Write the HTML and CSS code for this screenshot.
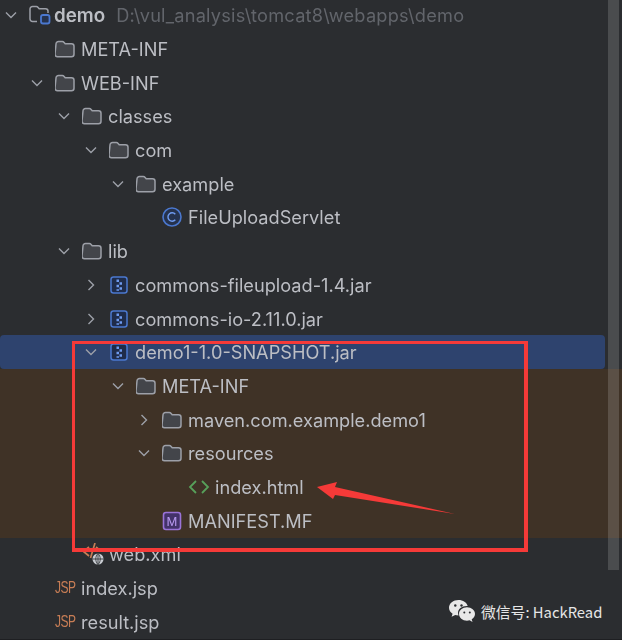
FILE: index.html
```html
<!DOCTYPE html>
<html lang="zh-CN">
<head>
    <meta charset="UTF-8">
    <meta name="viewport" content="width=device-width, initial-scale=1.0">
    <title>demo</title>
    <link rel="stylesheet" href="styles.css">
</head>
<body>
    <svg class="defs" width="0" height="0">
        <defs>
            <symbol id="open" viewBox="0 0 14 14"><path d="M2 4.500 7 9.500 12 4.500" fill="none" stroke="#9da0a8" stroke-width="1.400"/></symbol>
            <symbol id="closed" viewBox="0 0 14 14"><path d="M4.500 2 9.500 7 4.500 12" fill="none" stroke="#9da0a8" stroke-width="1.400"/></symbol>
            <symbol id="folder" viewBox="0 0 20 18"><path d="M1 4a2.500 2.500 0 0 1 2.500-2.500h3.800c.8 0 1.300.3 1.800.9l1.100 1.300h6.300a2.500 2.500 0 0 1 2.500 2.500v8a2.500 2.500 0 0 1-2.500 2.500h-14a2.500 2.500 0 0 1-2.500-2.500z" fill="#43454a" stroke="#9da0a8" stroke-width="1.500"/></symbol>
            <symbol id="jar" viewBox="0 0 18 18"><rect x="1" y="1" width="16" height="16" rx="2.500" fill="#1f2c4a" stroke="#4b78cf" stroke-width="1.500"/><path d="M6.500 3.500h2.500v2.500h-2.500zM9.500 6.200h2.500v2.500h-2.500zM6.500 8.700h2.500v2.500h-2.500zM9.500 11.200h2.500v2.500h-2.500zM6.500 13.200h2.500v1.500h-2.500z" fill="#6f9bf0"/></symbol>
        </defs>
    </svg>

    <div class="tree">
        <div class="row d0">
            <svg class="arrow"><use href="#open"/></svg>
            <svg class="icon-module" viewBox="0 0 22 20" width="22" height="20">
                <path d="M8 16.500H3.500A2.500 2.500 0 0 1 1 14V4a2.500 2.500 0 0 1 2.500-2.500h3.800c.8 0 1.300.3 1.800.9l1.100 1.300h6.300A2.500 2.500 0 0 1 19 6.200V8" fill="none" stroke="#9da0a8" stroke-width="1.500"/>
                <rect x="12" y="10" width="8.500" height="8.500" rx="2" fill="#25324d" stroke="#4b78cf" stroke-width="1.800"/>
            </svg>
            <span class="name bold">demo</span>
            <span class="path">D:\vul_analysis\tomcat8\webapps\demo</span>
        </div>
        <div class="row d1">
            <span class="arrow"></span>
            <svg class="icon-folder"><use href="#folder"/></svg>
            <span class="name">META-INF</span>
        </div>
        <div class="row d1">
            <svg class="arrow"><use href="#open"/></svg>
            <svg class="icon-folder"><use href="#folder"/></svg>
            <span class="name">WEB-INF</span>
        </div>
        <div class="row d2">
            <svg class="arrow"><use href="#open"/></svg>
            <svg class="icon-folder"><use href="#folder"/></svg>
            <span class="name">classes</span>
        </div>
        <div class="row d3">
            <svg class="arrow"><use href="#open"/></svg>
            <svg class="icon-folder"><use href="#folder"/></svg>
            <span class="name">com</span>
        </div>
        <div class="row d4">
            <svg class="arrow"><use href="#open"/></svg>
            <svg class="icon-folder"><use href="#folder"/></svg>
            <span class="name">example</span>
        </div>
        <div class="row d5">
            <span class="arrow"></span>
            <svg class="icon-square" viewBox="0 0 20 20">
                <circle cx="10" cy="10" r="9" fill="#25324d" stroke="#4b78cf" stroke-width="1.600"/>
                <path d="M13.300 7.200A4.200 4.200 0 1 0 13.300 12.800" fill="none" stroke="#6f9bf0" stroke-width="1.400"/>
            </svg>
            <span class="name">FileUploadServlet</span>
        </div>
        <div class="row d2">
            <svg class="arrow"><use href="#open"/></svg>
            <svg class="icon-folder"><use href="#folder"/></svg>
            <span class="name">lib</span>
        </div>
        <div class="row d3">
            <svg class="arrow"><use href="#closed"/></svg>
            <svg class="icon-jar"><use href="#jar"/></svg>
            <span class="name">commons-fileupload-1.4.jar</span>
        </div>
        <div class="row d3">
            <svg class="arrow"><use href="#closed"/></svg>
            <svg class="icon-jar"><use href="#jar"/></svg>
            <span class="name">commons-io-2.11.0.jar</span>
        </div>
        <div class="row d3 selected">
            <svg class="arrow"><use href="#open"/></svg>
            <svg class="icon-jar"><use href="#jar"/></svg>
            <span class="name">demo1-1.0-SNAPSHOT.jar</span>
        </div>
        <div class="jar-content">
            <div class="row d4">
                <svg class="arrow"><use href="#open"/></svg>
                <svg class="icon-folder"><use href="#folder"/></svg>
                <span class="name">META-INF</span>
            </div>
            <div class="row d5">
                <svg class="arrow"><use href="#closed"/></svg>
                <svg class="icon-folder"><use href="#folder"/></svg>
                <span class="name">maven.com.example.demo1</span>
            </div>
            <div class="row d5">
                <svg class="arrow"><use href="#open"/></svg>
                <svg class="icon-folder"><use href="#folder"/></svg>
                <span class="name">resources</span>
            </div>
            <div class="row d6">
                <span class="arrow"></span>
                <svg class="icon-wide" viewBox="0 0 22 22">
                    <path d="M8 5 2 11l6 6M14 5l6 6-6 6" fill="none" stroke="#57a05a" stroke-width="1.800"/>
                </svg>
                <span class="name">index.html</span>
            </div>
            <div class="row d5">
                <span class="arrow"></span>
                <svg class="icon-square" viewBox="0 0 20 20">
                    <rect x="1.500" y="1.500" width="17" height="17" rx="2.500" fill="#43326a" stroke="#9a73d8" stroke-width="1.600"/>
                    <text class="m-letter" x="10" y="15" text-anchor="middle">M</text>
                </svg>
                <span class="name">MANIFEST.MF</span>
            </div>
        </div>
        <div class="row d2">
            <span class="arrow"></span>
            <svg class="icon-wide" viewBox="0 0 22 22">
                <path d="M7 4 1.500 8.500 7 13M13 0 8.500 15M14 4l3.500 3" fill="none" stroke="#c77d55" stroke-width="1.700"/>
                <circle cx="16" cy="16" r="5.500" fill="#c9ccd2"/>
                <path d="M10.500 16h11M16 10.500v11M16 10.500c-3 3-3 8 0 11M16 10.500c3 3 3 8 0 11" fill="none" stroke="#2b2d30" stroke-width=".8"/>
            </svg>
            <span class="name">web.xml</span>
        </div>
        <div class="row d1">
            <span class="arrow"></span>
            <span class="icon-jsp">JSP</span>
            <span class="name">index.jsp</span>
        </div>
        <div class="row d1">
            <span class="arrow"></span>
            <span class="icon-jsp">JSP</span>
            <span class="name">result.jsp</span>
        </div>
    </div>

    <!-- overlays: scrollbar, annotation, watermark -->
    <div class="scrollbar"></div>
    <div class="red-box"></div>
    <svg class="red-arrow" width="140" height="30" viewBox="0 0 140 30">
        <polygon points="1,3 21,-2 19,3 139,30 19,11 17,15" fill="#f53a38"/>
    </svg>
    <div class="watermark">
        <svg class="wechat" width="26" height="23" viewBox="0 0 26 23">
            <path d="M9.500 0C4.300 0 0 3.400 0 7.700c0 2.500 1.400 4.600 3.600 6l-1 3.100 3.600-1.900c1 .3 2 .4 3.300.5-.3-.9-.5-1.700-.5-2.600C9 8.800 12.800 5.700 18.700 6 17.700 2.500 14 0 9.500 0z" fill="#e8e8e8"/>
            <path d="M26 14c0-3.700-3.500-6.700-8-6.700s-8 3-8 6.700 3.500 6.700 8 6.700c.9 0 1.800-.1 2.600-.4L23.500 22l-.8-2.700C24.700 18 26 16.100 26 14z" fill="#e8e8e8"/>
            <circle cx="6.300" cy="5.500" r="1.200" fill="#2b2d30"/>
            <circle cx="12.500" cy="5.500" r="1.200" fill="#2b2d30"/>
            <circle cx="15.300" cy="12.500" r="1" fill="#2b2d30"/>
            <circle cx="20.800" cy="12.500" r="1" fill="#2b2d30"/>
        </svg>
        <span class="wm-text">微信号: HackRead</span>
    </div>
</body>
</html>
```

FILE: styles.css
```css
html, body {
    height: 640px;
}

body {
    margin: 0;
    position: relative;
    overflow: hidden;
    background-color: #2b2d30;
    border-bottom: 1px solid #1e1f22;
    box-sizing: border-box;
    font-family: Inter, "Noto Sans", sans-serif;
    color: #bcbec4;
}

.defs {
    position: absolute;
}

/* the reference is a scaled-up capture, so everything is slightly soft */
.tree {
    margin-top: -1.5px;
    filter: blur(0.35px);
}

.row {
    display: flex;
    align-items: center;
    height: 33.7px;
    font-size: 18.2px;
    white-space: nowrap;
}

.d0 { padding-left: 3px; }
.d1 { padding-left: 29px; }
.d2 { padding-left: 56px; }
.d3 { padding-left: 83px; }
.d4 { padding-left: 110px; }
.d5 { padding-left: 136px; }
.d6 { padding-left: 162px; }

.arrow {
    display: block;
    flex: none;
    width: 14px;
    height: 14px;
    margin-left: 1px;
    margin-right: 11px;
}

.icon-folder {
    flex: none;
    width: 20px;
    height: 18px;
    margin-right: 6px;
}

.icon-square {
    flex: none;
    width: 20px;
    height: 20px;
    margin-right: 6px;
}

.icon-wide {
    flex: none;
    width: 22px;
    height: 22px;
    margin-right: 5px;
}

.icon-jar {
    flex: none;
    width: 18px;
    height: 18px;
    margin-left: 1px;
    margin-right: 7px;
}

.icon-module {
    flex: none;
    margin-right: 3px;
}

.icon-jsp {
    flex: none;
    width: 20px;
    margin-right: 6px;
    text-align: center;
    font-family: "Liberation Sans", sans-serif;
    font-size: 12px;
    letter-spacing: -0.5px;
    color: #c77d55;
    transform: scaleY(1.35);
}

.bold {
    font-size: 18.8px;
    font-weight: 600;
}

.path {
    margin-left: 11px;
    letter-spacing: 0.22px;
    color: #62656b;
}

.m-letter {
    font-family: "Liberation Sans", sans-serif;
    font-size: 13px;
    fill: #b99af0;
}

.selected {
    background-color: #2e436e;
    border-radius: 4px;
    margin-right: 17px;
}

.jar-content {
    background-color: #3f3226;
}

.scrollbar {
    position: absolute;
    top: 0;
    left: 608px;
    width: 11px;
    height: 570px;
    background-color: rgba(255, 255, 255, 0.15);
}

.red-box {
    position: absolute;
    left: 72px;
    top: 341px;
    width: 456px;
    height: 211px;
    box-sizing: border-box;
    border: 3px solid #f53a38;
    border-width: 3px 4px 4px 3px;
}

.red-arrow {
    position: absolute;
    left: 316px;
    top: 484px;
    overflow: visible;
}

.watermark {
    position: absolute;
    left: 449px;
    top: 600px;
    display: flex;
    align-items: center;
    gap: 6px;
}

.wm-text {
    font-family: "Noto Sans CJK SC", sans-serif;
    font-size: 14.8px;
    color: #e6e6e6;
}
```
